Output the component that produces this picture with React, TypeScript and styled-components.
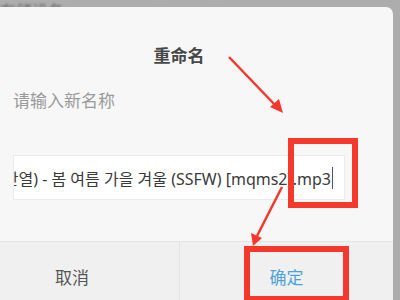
import React from "react";
import styled, { createGlobalStyle } from "styled-components";

const Global = createGlobalStyle`
  html, body { margin: 0; padding: 0; }
  body {
    width: 400px; height: 300px; overflow: hidden;
    background: #adadad;
    font-family: "Noto Sans CJK SC", "Noto Sans", sans-serif;
  }
`;

const Page = styled.div`
  position: relative;
  width: 400px;
  height: 300px;
  overflow: hidden;
  display: flex;
  flex-direction: column;
`;

const TopBar = styled.div`
  height: 7px;
  flex: none;
  overflow: hidden;
  display: flex;
  align-items: flex-end;
`;

const Crumbs = styled.div`
  display: flex;
  white-space: nowrap;
  font-size: 16px;
  line-height: 18px;
  color: #6a6a6a;
  margin-bottom: -12px;
  filter: blur(0.8px);
`;

const Crumb = styled.span<{ $w: number }>`
  display: inline-block;
  width: ${(p) => p.$w}px;
`;

const Dialog = styled.div`
  flex: 1;
  margin-left: -35px;
  width: 428px;
  box-sizing: border-box;
  background: #f7f7f7;
  border-top-right-radius: 7px;
  display: flex;
  flex-direction: column;
`;

const Body = styled.div`
  padding: 36px 48px 0;
  display: flex;
  flex-direction: column;
`;

const Title = styled.div`
  text-align: center;
  font-size: 17px;
  line-height: 24px;
  font-weight: 600;
  color: #474747;
`;

const Label = styled.div`
  margin-top: 21px;
  font-size: 17px;
  line-height: 24px;
  color: #9a9a9a;
`;

const Input = styled.div`
  margin-top: 43px;
  height: 45px;
  box-sizing: border-box;
  background: #fff;
  border: 1px solid #ebebeb;
  display: flex;
  align-items: center;
  justify-content: flex-end;
  overflow: hidden;
  padding-right: 11px;
`;

const InputText = styled.span`
  white-space: nowrap;
  flex: none;
  font-family: "Noto Sans", "Noto Sans CJK KR", sans-serif;
  font-size: 16px;
  color: #3a3a3a;
`;

const Caret = styled.span`
  flex: none;
  width: 1px;
  height: 22px;
  margin-left: 1px;
  background: #555;
`;

const Footer = styled.div`
  margin-top: 41px;
  flex: 1;
  border-top: 1px solid #e3e3e3;
  background: #f0f0f0;
  display: grid;
  grid-template-columns: 1fr 1fr;
`;

const FooterButton = styled.div<{ $primary?: boolean }>`
  height: 68px;
  display: flex;
  align-items: center;
  justify-content: center;
  font-size: 17px;
  color: ${(p) => (p.$primary ? "#4ea2dc" : "#555")};
  & + & { border-left: 1px solid #e3e3e3; }
`;

const Overlay = styled.svg`
  position: absolute;
  left: 0;
  top: 0;
  pointer-events: none;
`;

export default function App() {
  const red = "#f4392c";
  return (
    <>
      <Global />
      <Page>
        <TopBar>
          <Crumbs>
            <Crumb $w={157}>存储设备 &gt;</Crumb>
            <Crumb $w={57}>&gt;</Crumb>
            <Crumb $w={20}>&gt;</Crumb>
          </Crumbs>
        </TopBar>
        <Dialog>
          <Body>
            <Title>重命名</Title>
            <Label>请输入新名称</Label>
            <Input>
              <InputText>잔열) - 봄 여름 가을 겨울 (SSFW) [mqms2].mp3</InputText>
              <Caret />
            </Input>
          </Body>
          <Footer>
            <FooterButton>取消</FooterButton>
            <FooterButton $primary>确定</FooterButton>
          </Footer>
        </Dialog>
        <Overlay width="400" height="300" viewBox="0 0 400 300">
          <line x1="229" y1="57" x2="276" y2="106" stroke={red} strokeWidth="2.5" />
          <polygon points="283,113 270,107 279,99" fill={red} />
          <rect x="291" y="141" width="64" height="64" fill="none" stroke={red} strokeWidth="6" />
          <line x1="282" y1="187" x2="257" y2="236" stroke={red} strokeWidth="2.5" />
          <polygon points="253,246 251,233 262,238" fill={red} />
          <rect x="247" y="249" width="99" height="50" fill="none" stroke={red} strokeWidth="6" />
        </Overlay>
      </Page>
    </>
  );
}
